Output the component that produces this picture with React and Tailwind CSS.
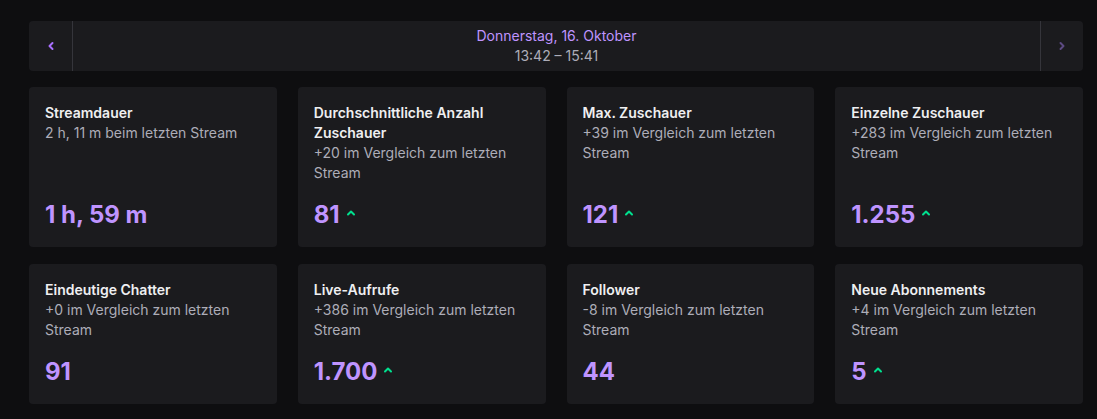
import React from "react";

const cards = [
  { title: "Streamdauer", sub: "2 h, 11 m beim letzten Stream", value: "1 h, 59 m", up: false },
  { title: "Durchschnittliche Anzahl Zuschauer", sub: "+20 im Vergleich zum letzten Stream", value: "81", up: true },
  { title: "Max. Zuschauer", sub: "+39 im Vergleich zum letzten Stream", value: "121", up: true },
  { title: "Einzelne Zuschauer", sub: "+283 im Vergleich zum letzten Stream", value: "1.255", up: true },
  { title: "Eindeutige Chatter", sub: "+0 im Vergleich zum letzten Stream", value: "91", up: false },
  { title: "Live-Aufrufe", sub: "+386 im Vergleich zum letzten Stream", value: "1.700", up: true },
  { title: "Follower", sub: "-8 im Vergleich zum letzten Stream", value: "44", up: false },
  { title: "Neue Abonnements", sub: "+4 im Vergleich zum letzten Stream", value: "5", up: true },
];

function Chevron({ dir, className }) {
  return (
    <svg width="8" height="10" viewBox="0 0 8 10" className={className}>
      {dir === "left" ? (
        <path d="M5.5 2 L2.5 5 L5.5 8" fill="none" stroke="currentColor" strokeWidth="2" strokeLinecap="round" strokeLinejoin="round" />
      ) : (
        <path d="M2.5 2 L5.5 5 L2.5 8" fill="none" stroke="currentColor" strokeWidth="2" strokeLinecap="round" strokeLinejoin="round" />
      )}
    </svg>
  );
}

function UpArrow() {
  return (
    <svg width="10" height="8" viewBox="0 0 10 8" className="text-[#00e08e] ml-[6px] mt-[-4px]">
      <path d="M2 5.5 L5 2.5 L8 5.5" fill="none" stroke="currentColor" strokeWidth="2" strokeLinecap="round" strokeLinejoin="round" />
    </svg>
  );
}

function Card({ c }) {
  return (
    <div className="bg-[#1b1b1e] rounded-[4px] p-4 flex flex-col">
      <div className="text-[14px] leading-5 font-semibold text-[#efeff1]">{c.title}</div>
      <div className="text-[14px] leading-5 text-[#adadb8]">{c.sub}</div>
      <div className="mt-auto pt-4 flex items-center">
        <span className="text-[24px] leading-8 font-bold text-[#bf94ff]">{c.value}</span>
        {c.up && <UpArrow />}
      </div>
    </div>
  );
}

export default function App() {
  return (
    <div
      className="min-h-[419px] bg-[#0e0e10] pl-[29px] pr-[14px] pt-[21px] pb-4"
      style={{ fontFamily: "Inter, 'Noto Sans', sans-serif" }}
    >
      <div className="flex h-[50px] bg-[#1b1b1e] rounded-[4px]">
        <div className="w-[44px] flex items-center justify-center border-r border-[#35353b] text-[#a970ff]">
          <Chevron dir="left" />
        </div>
        <div className="flex-1 flex flex-col items-center justify-center">
          <div className="text-[14px] leading-5 text-[#bf94ff]">Donnerstag, 16. Oktober</div>
          <div className="text-[14px] leading-5 text-[#adadb8]">13:42 – 15:41</div>
        </div>
        <div className="w-[43px] flex items-center justify-center border-l border-[#35353b] text-[#5c4a82]">
          <Chevron dir="right" />
        </div>
      </div>
      <div className="grid grid-cols-4 gap-x-[21px] gap-y-[17px] mt-[16px]">
        {cards.map((c, i) => (
          <Card key={i} c={c} />
        ))}
      </div>
    </div>
  );
}
